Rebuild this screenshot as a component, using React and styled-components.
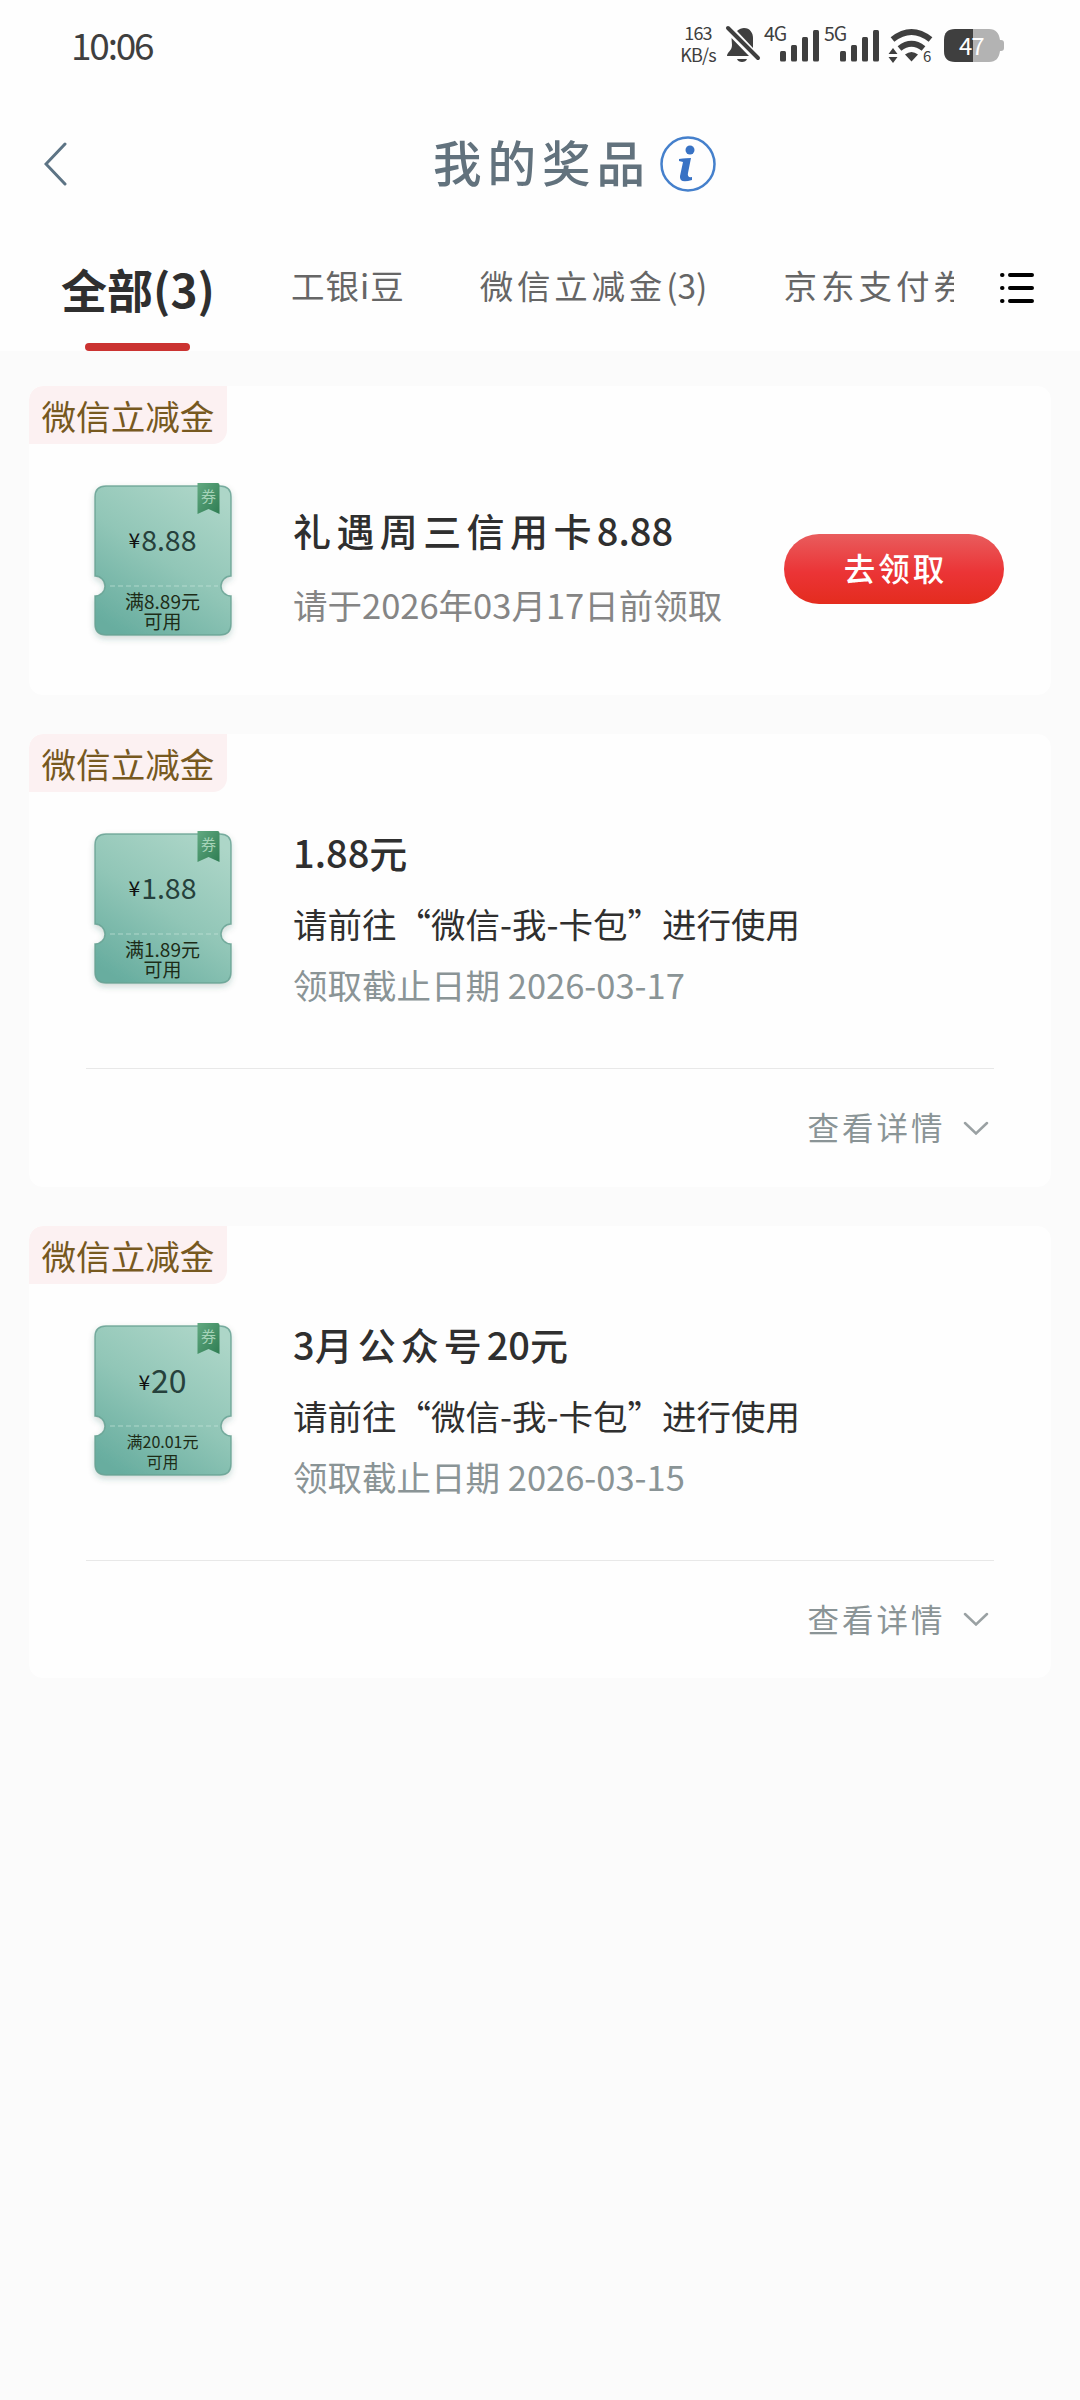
import React from 'react'
import styled, { createGlobalStyle, css } from 'styled-components'

const ink = '#2f2f2f'
const status_ink = '#3f3f3f'
const slate = '#62727d'
const muted = '#8a9496'
const page_bg = '#fbfbfb'
const sans = `'Noto Sans CJK SC', 'Noto Sans', sans-serif`

const GlobalStyle = createGlobalStyle`
  * { box-sizing: border-box; }
  body {
    margin: 0;
    background: ${page_bg};
    font-family: ${sans};
    color: ${ink};
  }
`

const Page = styled.div`
  width: 1080px;
  min-height: 2400px;
  background: ${page_bg};
  overflow: hidden;
`

const Top = styled.header`
  height: 351px;
  background: #fefefe;
`

const StatusBar = styled.div`
  height: 92px;
  padding: 0 75px 0 71px;
  display: flex;
  justify-content: space-between;
  align-items: center;
  color: ${status_ink};
`

const Clock = styled.span`
  margin-bottom: 5px;
  font-size: 37px;
  line-height: 40px;
  letter-spacing: -2.2px;
`

const StatusIcons = styled.div`
  display: flex;
  align-items: flex-start;
  height: 40px;
`

const Speed = styled.div`
  width: 38px;
  margin: -5px 9px 0 0;
  text-align: center;
  font-size: 18px;
  line-height: 22px;
  letter-spacing: -0.8px;
`

const StatusIcon = styled.svg`
  display: block;
  overflow: visible;
  margin-right: ${props => props.$gap || 0}px;
  font-family: ${sans};
`

const NavBar = styled.div`
  height: 144px;
  display: grid;
  grid-template-columns: 1fr auto 1fr;
  align-items: center;
  padding: 0 44px;
`

const Title = styled.h1`
  margin: 0 0 6px;
  padding-left: 4px;
  font-size: 48.5px;
  line-height: 60px;
  font-weight: 500;
  letter-spacing: 6px;
  color: ${slate};
`

const InfoIcon = styled.svg`
  margin-left: 8px;
`

const TabBar = styled.nav`
  height: 115px;
  display: flex;
  padding-left: 61px;
`

const TabList = styled.div`
  width: 893px;
  display: flex;
  overflow: hidden;
`

const Tab = styled.div`
  flex: none;
  height: 115px;
  padding-top: 24px;
  margin-right: ${props => props.$gap || 0}px;
  font-size: 33.5px;
  line-height: 50px;
  color: #666;
  display: flex;
  flex-direction: column;
  justify-content: space-between;
  align-items: center;
  white-space: nowrap;
  ${props => props.$active && css`
    padding-top: 27px;
    font-size: 46px;
    font-weight: 700;
    color: ${ink};

    &::after {
      content: '';
      width: 105px;
      height: 8px;
      border-radius: 4px;
      background: #cb3331;
    }
  `}
`

const Wide = styled.span`
  letter-spacing: ${props => props.$by}px;
`

const ListIcon = styled.svg`
  margin: 36px 0 0 44px;
`

const CardList = styled.main`
  padding: 35px 29px 0;
  display: flex;
  flex-direction: column;
  gap: 39px;
`

const Card = styled.section`
  height: ${props => props.$tall ? 452.5 : 309}px;
  border-radius: 14px;
  background: #fefefe;
  overflow: hidden;
`

const Tag = styled.div`
  width: 198px;
  height: 58px;
  padding-left: 12.5px;
  border-radius: 14px 0 14px 0;
  background: #fcf1f2;
  color: #77591f;
  font-size: 34.6px;
  line-height: 58px;
`

const CardBody = styled.div`
  display: flex;
  height: ${props => props.$tall ? 276 : 250}px;
  padding: 38px 47px 0 62px;
`

const Ticket = styled.div`
  position: relative;
  width: 143px;
  height: 158px;
  margin-right: 59px;
  flex: none;
  text-align: center;
`

const TicketShape = styled.svg`
  position: absolute;
  left: -7px;
  top: -6px;
`

const Amount = styled.div`
  position: relative;
  height: 109px;
  padding-top: 36px;
  display: flex;
  justify-content: center;
  align-items: baseline;
  gap: 1px;
  color: #26413c;
  font-size: ${props => props.$size}px;
  line-height: 42px;
`

const Yen = styled.span`
  font-size: 21px;
  color: #111;
  position: relative;
  top: -3px;
`

const Condition = styled.div`
  position: relative;
  font-size: ${props => props.$size}px;
  line-height: 20px;
  color: #1d2c17;
`

const Info = styled.div`
  flex: 1;
  margin-top: ${props => props.$top}px;
`

const Name = styled.div`
  font-size: 38px;
  line-height: 54px;
  font-weight: 500;
  white-space: nowrap;
`

const Line = styled.div`
  margin-top: ${props => props.$top}px;
  font-size: 34.5px;
  line-height: 50px;
  color: ${props => props.color || ink};
  white-space: nowrap;
`

const ClaimButton = styled.button`
  align-self: flex-start;
  width: 220px;
  height: 70px;
  margin-top: 52px;
  padding: 0 0 4px 3px;
  border: 0;
  border-radius: 35px;
  background: linear-gradient(#e95c5d, #eb3436 55%, #e42c1e);
  color: #fff;
  font-family: inherit;
  font-size: 31.5px;
  font-weight: 500;
  letter-spacing: 3px;
`

const CardFooter = styled.div`
  margin: 0 57px;
  height: 118px;
  padding-right: 5px;
  border-top: 1px solid #e8e8e8;
  display: flex;
  justify-content: flex-end;
  align-items: center;
  gap: 17.5px;
  color: ${muted};
  font-size: 31.5px;
  letter-spacing: 3px;
`

const More = styled.span`
  padding-bottom: 3px;
`

const prizes = [
  {
    price: '8.88',
    priceSize: 28.5,
    min: '8.89',
    minSize: 19,
    name: <><Wide $by={5.4}>礼遇周三信用卡</Wide>8.88</>,
    claimBy: '请于2026年03月17日前领取',
  },
  {
    price: '1.88',
    priceSize: 28.5,
    min: '1.89',
    minSize: 19,
    name: '1.88元',
    deadline: '2026-03-17',
  },
  {
    price: '20',
    priceSize: 32,
    min: '20.01',
    minSize: 16,
    name: <>3<Wide $by={5}>月公众号</Wide>20元</>,
    deadline: '2026-03-15',
  },
]

const Signal = ({ label, gap }) => (
  <StatusIcon width="55" height="40" $gap={gap} fill={status_ink}>
    <text x="-1" y="15" fontSize="19.500" letterSpacing="-1">{label}</text>
    <rect x="15" y="25" width="6" height="10.500" rx="1.500" />
    <rect x="26" y="19" width="6" height="16.500" rx="1.500" />
    <rect x="37" y="11" width="6" height="24.500" rx="1.500" />
    <rect x="48" y="4" width="6" height="31.500" rx="1.500" />
  </StatusIcon>
)

const StatusGlyphs = () => (
  <StatusIcons>
    <Speed>163<br />KB/s</Speed>
    <StatusIcon width="34" height="40" $gap="5" fill={status_ink}>
      <path d="M11 5C13 3 16 2 18 2c6 0 9 5 9 10v10zM5.500 12L23 30H1c0-4 5-5 5-11z" />
      <path d="M11 33h10c-1 4-9 4-10 0z" />
      <path d="M2 2L32 32" stroke={status_ink} strokeWidth="4" strokeLinecap="round" />
    </StatusIcon>
    <Signal label="4G" gap="5" />
    <Signal label="5G" gap="9" />
    <StatusIcon width="46" height="40" $gap="8" fill={status_ink}>
      <path d="M3.500 13.500Q22.500-1.500 41.500 13.500" fill="none" stroke={status_ink} strokeWidth="6" />
      <path d="M10.500 22.500Q22.500 13 34.500 22.500" fill="none" stroke={status_ink} strokeWidth="6" />
      <path d="M16 28.500q6.500-5 13 0l-6.500 7zM4 22l4.500 6h-9zM4 37l4.500-6h-9z" />
      <text x="34" y="35.500" fontSize="15">6</text>
    </StatusIcon>
    <StatusIcon width="62" height="40">
      <path d="M30 3h16c7 0 10 4 11 11h1q3 0 3 3v5q0 3-3 3h-1c-1 7-4 11-11 11H30z" fill="#b3b3b3" />
      <path d="M30 3H12Q1 3 1 14v11q0 11 11 11h18z" fill={status_ink} />
      <text x="16" y="28.500" fontSize="24" letterSpacing="-1" fill="#fff">47</text>
    </StatusIcon>
  </StatusIcons>
)

const PrizeTicket = ({ price, priceSize, min, minSize }) => (
  <Ticket>
    <TicketShape width="157" height="172" viewBox="0 0 157 172">
      <defs>
        <linearGradient id="ticket" x1="0.8" y1="0" x2="0.2" y2="1">
          <stop offset="0" stopColor="#add6c8" />
          <stop offset="0.5" stopColor="#91c6b7" />
          <stop offset="1" stopColor="#67ad9f" />
        </linearGradient>
        <linearGradient id="ribbon" x1="0" y1="0" x2="1" y2="1">
          <stop offset="0" stopColor="#62a981" />
          <stop offset="1" stopColor="#2f7d53" />
        </linearGradient>
        <filter id="shade" x="-10%" y="-10%" width="120%" height="125%">
          <feDropShadow dx="0" dy="3" stdDeviation="3" floodColor="#2c5c50" floodOpacity="0.22" />
        </filter>
      </defs>
      <path
        d="M22 10h114q11 0 11 11v79a10 10 0 0 0 0 20v28q0 11-11 11H22q-11 0-11-11v-28a10 10 0 0 0 0-20V21q0-11 11-11z"
        fill="url(#ticket)"
        stroke="#69a294"
        strokeOpacity="0.85"
        strokeWidth="1.500"
        filter="url(#shade)"
      />
      <path d="M26 110h108" stroke="#cfe8df" strokeOpacity="0.4" strokeWidth="1.500" strokeDasharray="5 3" />
      <path d="M113.500 7h20q2 0 2 2v29l-11-5-11 5z" fill="url(#ribbon)" />
      <text x="117" y="26" fontSize="15" fill="#a5d3b8" fontFamily="Noto Sans CJK SC">券</text>
    </TicketShape>
    <Amount $size={priceSize}><Yen>¥</Yen>{price}</Amount>
    <Condition $size={minSize}>满{min}元<br />可用</Condition>
  </Ticket>
)

const PrizeCard = ({ prize }) => {
  const tall = !prize.claimBy
  return (
    <Card $tall={tall}>
      <Tag>微信立减金</Tag>
      <CardBody $tall={tall}>
        <PrizeTicket {...prize} />
        <Info $top={tall ? -5 : 21}>
          <Name>{prize.name}</Name>
          {tall ? (
            <>
              <Line $top={19}>请前往“微信-我-卡包”进行使用</Line>
              <Line $top={11} color={muted}>领取截止日期 {prize.deadline}</Line>
            </>
          ) : (
            <Line $top={22} color="#858585">{prize.claimBy}</Line>
          )}
        </Info>
        {!tall && <ClaimButton>去领取</ClaimButton>}
      </CardBody>
      {tall && (
        <CardFooter>
          <More>查看详情</More>
          <svg width="26" height="14" fill="none" stroke="#9aa1a3" strokeWidth="2.500" strokeLinecap="round">
            <path d="M2 2l11 10.500L24 2" />
          </svg>
        </CardFooter>
      )}
    </Card>
  )
}

const App = () => (
  <>
    <GlobalStyle />
    <Page>
      <Top>
        <StatusBar>
          <Clock>10:06</Clock>
          <StatusGlyphs />
        </StatusBar>
        <NavBar>
          <svg width="24" height="44" fill="none" stroke="#5d7485" strokeWidth="3" strokeLinecap="round">
            <path d="M21 2L2 22l19 20" />
          </svg>
          <Title>我的奖品</Title>
          <InfoIcon width="58" height="58" fill="none" stroke="#4580cc">
            <circle cx="29" cy="29" r="26.500" strokeWidth="2.500" />
            <circle cx="31" cy="15" r="4.500" fill="#3872c4" stroke="none" />
            <path d="M20 24q8-1 12-1l-3 15q-1 5 4 4v3q-13 4-12-4l3-14-4-1z" fill="#3872c4" stroke="none" />
          </InfoIcon>
        </NavBar>
        <TabBar>
          <TabList>
            <Tab $active $gap="76">全部(3)</Tab>
            <Tab $gap="75"><Wide $by={1}>工银i豆</Wide></Tab>
            <Tab $gap="76"><span><Wide $by={3.8}>微信立减金</Wide>(3)</span></Tab>
            <Tab><Wide $by={4}>京东支付券</Wide></Tab>
          </TabList>
          <ListIcon width="38" height="32" stroke="#000" strokeWidth="4" strokeLinecap="round">
            <path d="M4 3h.5M4 16h.5M4 29h.5M12 3h22M12 16h22M12 29h22" />
          </ListIcon>
        </TabBar>
      </Top>
      <CardList>
        {prizes.map(prize => <PrizeCard key={prize.price} prize={prize} />)}
      </CardList>
    </Page>
  </>
)

export default App
